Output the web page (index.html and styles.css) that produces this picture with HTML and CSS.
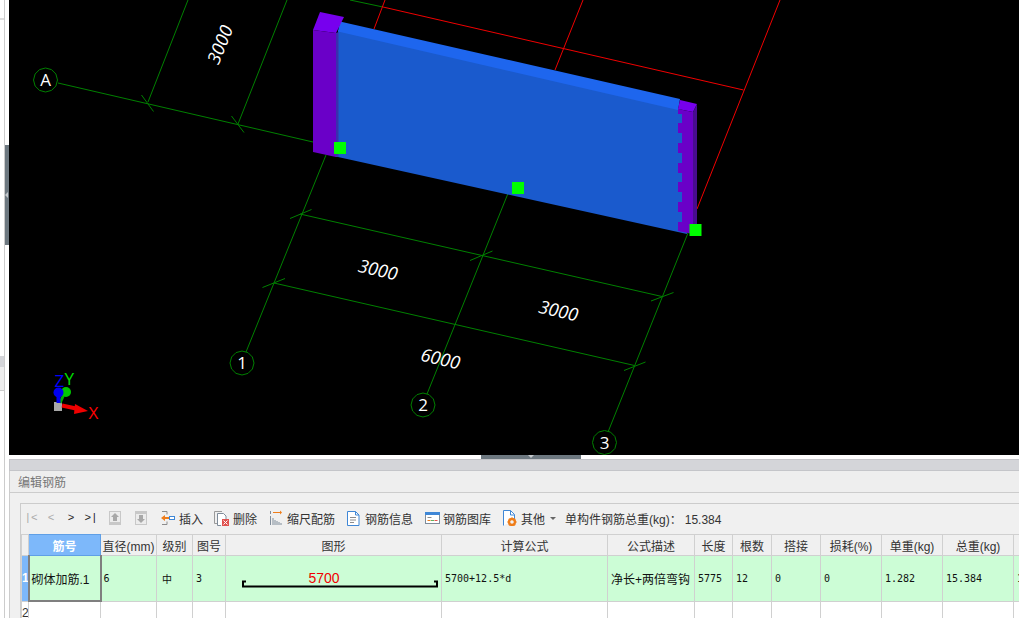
FILE: index.html
```html
<!DOCTYPE html>
<html lang="zh-CN">
<head>
  <meta charset="UTF-8">
  <title>编辑钢筋</title>
  <link rel="stylesheet" href="styles.css">
</head>
<body>
  <div class="app">
    <div class="side">
      <div class="side-stub">
        <div class="stub-top"></div>
        <div class="stub-band"></div>
        <div class="stub-title"></div>
      </div>
      <div class="side-handle"><span class="side-arrow"></span></div>
    </div>

    <div class="main">
      <svg class="view" width="1010" height="455" viewBox="9 0 1010 455">
        <defs>
          <polygon id="bubble" points="12,0 10.4,6 6,10.4 0,12 -6,10.4 -10.4,6 -12,0 -10.4,-6 -6,-10.4 0,-12 6,-10.4 10.4,-6"/>
        </defs>

        <!-- grid lines -->
        <g class="grid">
          <line x1="58" y1="83" x2="313" y2="142"/>
          <line x1="246" y1="352" x2="326" y2="155"/>
          <line x1="427" y1="394" x2="511" y2="186"/>
          <line x1="608" y1="432" x2="688" y2="233"/>
          <line x1="350" y1="0" x2="383" y2="7"/>
          <!-- dimension lines -->
          <line x1="300" y1="214" x2="662" y2="296.5"/>
          <line x1="274" y1="283" x2="634.5" y2="365.5"/>
          <line x1="148" y1="102" x2="188" y2="0"/>
          <line x1="238" y1="124" x2="287" y2="0"/>
          <!-- ticks -->
          <line x1="290" y1="218.5" x2="311.5" y2="209.5"/>
          <line x1="470" y1="260.5" x2="492.5" y2="251"/>
          <line x1="651" y1="301" x2="673.5" y2="292.5"/>
          <line x1="262.5" y1="287.5" x2="285" y2="278.5"/>
          <line x1="624" y1="370.5" x2="645.5" y2="362"/>
          <line x1="141.5" y1="95" x2="153.5" y2="111.5"/>
          <line x1="231.5" y1="116" x2="244" y2="132.5"/>
        </g>
        <g class="red-lines">
          <line x1="383" y1="7" x2="743.5" y2="90"/>
          <line x1="385" y1="0" x2="374" y2="29"/>
          <line x1="583" y1="0" x2="555" y2="70"/>
          <line x1="780" y1="0" x2="697" y2="209"/>
        </g>

        <!-- wall -->
        <polygon class="wall-front" points="338,30 682,110 687,234 338,157"/>
        <polygon class="wall-top" points="340,21.5 680,99 678,110 338,31.5"/>
        <polygon class="wall-edge" points="336,33 338.500,32 338.500,157 336,157"/>
        <polygon class="col-top" points="320,12 344,17 336,33 313,30"/>
        <polygon class="col-front" points="313,30 336,33 336,157 313,152"/>
        <polygon class="col-top" points="680,100 697,104 693,112 678,109"/>
        <polygon class="col-side" points="693,112 697,104 697,228 693,234"/>
        <polygon class="col-front" points="678,109 693,112 693,234 678,231 678,222 682,222 682,212 678,212 678,202 682,202 682,192 678,192 678,182 682,182 682,173 678,173 678,163 682,163 682,153 678,153 678,143 682,143 682,133 678,133 678,123 682,123 682,114 678,114"/>

        <!-- grips -->
        <rect class="grip" x="334" y="142" width="12" height="12"/>
        <rect class="grip" x="512" y="182" width="12" height="12"/>
        <rect class="grip" x="689.5" y="224" width="12" height="12"/>

        <!-- axis bubbles -->
        <use class="bubble" href="#bubble" x="45.5" y="80"/>
        <use class="bubble" href="#bubble" x="242" y="363"/>
        <use class="bubble" href="#bubble" x="423" y="405"/>
        <use class="bubble" href="#bubble" x="604.5" y="442.5"/>
        <text class="bubble-label" x="45.5" y="86">A</text>
        <text class="bubble-label" x="242" y="369">1</text>
        <text class="bubble-label" x="423" y="411">2</text>
        <text class="bubble-label" x="604.5" y="448.5">3</text>

        <!-- dimensions -->
        <text class="dim" transform="translate(376.5 276) rotate(13)">3000</text>
        <text class="dim" transform="translate(557 317) rotate(13)">3000</text>
        <text class="dim" transform="translate(439 365) rotate(13)">6000</text>
        <text class="dim" transform="translate(226 47) rotate(-68)">3000</text>

        <!-- ucs -->
        <rect x="54" y="402" width="8" height="9" fill="#a8a8a8"/>
        <line x1="60" y1="403" x2="65" y2="392" stroke="#00b000" stroke-width="3"/>
        <ellipse cx="66" cy="392" rx="5" ry="5" fill="#00c800"/>
        <line x1="58.5" y1="403" x2="58.5" y2="392" stroke="#0000f0" stroke-width="4"/>
        <circle cx="58.5" cy="392.5" r="5" fill="#0000f0"/>
        <line x1="62" y1="405.5" x2="76" y2="408.5" stroke="#f00000" stroke-width="4"/>
        <polygon points="75,404 88,411 74,414" fill="#f00000"/>
        <text class="ucs" x="54.5" y="387" fill="#0000ff">Z</text>
        <text class="ucs" x="64.5" y="385" fill="#00e000">Y</text>
        <text class="ucs" x="88.5" y="419" fill="#ff0000">X</text>
      </svg>

      <div class="splitter"><span class="splitter-handle"><span class="splitter-arrow"></span></span></div>

      <div class="panel">
        <div class="panel-band"></div>
        <div class="panel-title">编辑钢筋</div>
        <div class="panel-body">
          <div class="rebar-box">
            <div class="toolbar">
              <div class="nav">
                <span class="nav-btn off">|&lt;</span>
                <span class="nav-btn off">&lt;</span>
                <span class="nav-btn">&gt;</span>
                <span class="nav-btn">&gt;|</span>
              </div>

              <svg class="tb-icon tb-move" viewBox="0 0 16 16">
                <rect x="3" y="1" width="12" height="14" fill="#c8c8c8"/>
                <rect x="4" y="2" width="10" height="10" fill="#ececec"/>
                <path d="M9 3l4 4h-2v4H7V7H5z" fill="#a8a8a8"/>
              </svg>
              <svg class="tb-icon tb-btn" viewBox="0 0 16 16">
                <rect x="2" y="1" width="12" height="14" fill="#c8c8c8"/>
                <rect x="3" y="4" width="10" height="10" fill="#ececec"/>
                <path d="M6 5h4v4h2l-4 4-4-4h2z" fill="#a8a8a8"/>
              </svg>

              <div class="tb-btn tb-item">
                <svg class="tb-icon" viewBox="0 0 16 16">
                  <path d="M2 1.500h5v3M2 14.500h5v-3" fill="none" stroke="#8c8c8c"/>
                  <path d="M1 8l4-3v2h4v2H5v2z" fill="#ef7d1a"/>
                  <rect x="9.500" y="6.500" width="5" height="3" fill="#fff" stroke="#3f87d6"/>
                </svg>
                插入
              </div>
              <div class="tb-btn tb-item">
                <svg class="tb-icon" viewBox="0 0 16 16">
                  <path d="M4 13.500H.5V1.500H8" fill="none" stroke="#9a9a9a"/>
                  <path d="M7 15.500H3.500V3.500h6l2.500 2.500v3" fill="#fff" stroke="#7f8c9a"/>
                  <rect x="8" y="9" width="7" height="7" fill="#e0524f"/>
                  <path d="M9.500 10.500l4 4m0-4l-4 4" stroke="#fff"/>
                </svg>
                删除
              </div>
              <div class="tb-btn tb-item">
                <svg class="tb-icon" viewBox="0 0 16 16">
                  <path d="M2.500 1v3" stroke="#7f8c9a"/>
                  <path d="M5 2.500h7" stroke="#ef7d1a"/>
                  <path d="M12 .5l2 2-2 2z" fill="#ef7d1a"/>
                  <path d="M2.500 6v9M5 8v7M7 10v5M9 11v4M11 12v3M13 13v2" stroke="#7f8c9a"/>
                </svg>
                缩尺配筋
              </div>
              <div class="tb-btn tb-item">
                <svg class="tb-icon" viewBox="0 0 16 16">
                  <path d="M1.500 1.500h8l3.500 3.500v10.500H1.500z" fill="#fff" stroke="#3f87d6"/>
                  <path d="M9.500 1.500V5H13" fill="none" stroke="#3f87d6"/>
                  <path d="M4 7.500h6M4 10h6M4 12.500h4" stroke="#8c8c8c"/>
                </svg>
                钢筋信息
              </div>
              <div class="tb-btn tb-item">
                <svg class="tb-icon" viewBox="0 0 16 16">
                  <rect x="1.500" y="2.500" width="14" height="11" fill="#fff" stroke="#7f8c9a"/>
                  <rect x="1" y="2" width="15" height="3" fill="#3f87d6"/>
                  <path d="M3.500 7.500h4" stroke="#8c8c8c"/>
                  <path d="M3.500 10.500h3" stroke="#ef7d1a"/>
                  <path d="M7 10.500h3" stroke="#5fb35f"/>
                  <path d="M10.500 10.500h3" stroke="#e0524f"/>
                </svg>
                钢筋图库
              </div>
              <div class="tb-btn tb-item">
                <svg class="tb-icon" viewBox="0 0 16 16">
                  <path d="M1.500 15.500V.5h7l4 4v5" fill="#fff" stroke="#3f87d6"/>
                  <path d="M8.500.5V5h4" fill="none" stroke="#3f87d6"/>
                  <circle cx="10" cy="12" r="3" fill="none" stroke="#ef7d1a" stroke-width="2.400"/>
                  <path d="M10 7.500v2M10 14.500v2M5.500 12h2M12.500 12h2M6.800 8.800l1.500 1.500M11.700 13.700l1.500 1.500M13.200 8.800l-1.500 1.500M8.300 13.700l-1.500 1.500" stroke="#ef7d1a" stroke-width="1.400"/>
                </svg>
                其他
                <span class="caret"></span>
              </div>
              <div class="total">单构件钢筋总重(kg)：<span class="total-val">15.384</span></div>
            </div>

            <table class="rebar-table">
              <colgroup>
                <col class="c-head"><col class="c-name"><col class="c-dia"><col class="c-grade"><col class="c-fig">
                <col class="c-shape"><col class="c-formula"><col class="c-desc"><col class="c-len"><col class="c-count">
                <col class="c-lap"><col class="c-loss"><col class="c-unit"><col class="c-sum"><col class="c-more">
              </colgroup>
              <thead>
                <tr>
                  <th></th>
                  <th class="active">筋号</th>
                  <th>直径(mm)</th>
                  <th>级别</th>
                  <th>图号</th>
                  <th>图形</th>
                  <th>计算公式</th>
                  <th>公式描述</th>
                  <th>长度</th>
                  <th>根数</th>
                  <th>搭接</th>
                  <th>损耗(%)</th>
                  <th>单重(kg)</th>
                  <th>总重(kg)</th>
                  <th></th>
                </tr>
              </thead>
              <tbody>
                <tr class="row-on">
                  <td class="row-head on">1</td>
                  <td class="cell-cur">砌体加筋.1</td>
                  <td class="num dia">6</td>
                  <td class="grade">中</td>
                  <td class="num">3</td>
                  <td class="shape">
                    <svg class="shape-svg" width="215" height="44" viewBox="0 0 215 44">
                      <text class="shape-len" x="98" y="27">5700</text>
                      <path class="shape-bar" d="M20 25.500h-3v5h194v-5h-3"/>
                    </svg>
                  </td>
                  <td class="num">5700+12.5*d</td>
                  <td>净长+两倍弯钩</td>
                  <td class="num">5775</td>
                  <td class="num">12</td>
                  <td class="num">0</td>
                  <td class="num">0</td>
                  <td class="num">1.282</td>
                  <td class="num">15.384</td>
                  <td class="num">1</td>
                </tr>
                <tr class="row-off">
                  <td class="row-head">2</td>
                  <td></td><td></td><td></td><td></td><td></td><td></td><td></td>
                  <td></td><td></td><td></td><td></td><td></td><td></td><td></td>
                </tr>
              </tbody>
            </table>
          </div>
        </div>
      </div>
    </div>
  </div>
</body>
</html>
```

FILE: styles.css
```css
html, body {
  margin: 0;
  height: 618px;
  overflow: hidden;
  background: #fff;
}
body {
  font-family: "Liberation Sans", "Noto Sans CJK SC", sans-serif;
  font-size: 12px;
  color: #333;
}
.app {
  display: flex;
  width: 1019px;
  height: 618px;
  overflow: hidden;
}

/* left gutter */
.side {
  display: flex;
  flex: none;
  width: 9px;
}
.side-stub {
  width: 4px;
  border-right: 1px solid #ccc;
}
.stub-top {
  height: 18px;
  border-bottom: 2px solid #ddd;
}
.stub-band {
  height: 11px;
  margin-top: 336px;
  background: #d4d5d9;
}
.stub-title {
  height: 23px;
  background: #eee;
  border-bottom: 1px solid #ccc;
}
.side-handle {
  display: flex;
  align-items: center;
  width: 4px;
  height: 100px;
  margin-top: 145px;
  background: #6d7880;
}
.side-arrow {
  border: 3px solid transparent;
  border-left-width: 0;
  border-right-color: #c4c8cc;
}

.main {
  flex: none;
  display: flex;
  flex-direction: column;
  width: 1010px;
}

/* drawing */
.view {
  display: block;
  flex: none;
  background: #000;
}
.grid line {
  stroke: #008000;
  stroke-width: 1;
}
.red-lines line {
  stroke: #f00000;
  stroke-width: 1;
}
.wall-front { fill: #1a5acd; }
.wall-top { fill: #1e66ee; }
.wall-edge { fill: #3a30ad; }
.col-top { fill: #7700ee; }
.col-front { fill: #6a00c8; }
.col-side { fill: #480c90; }
.grip { fill: #00ff00; }
.bubble {
  fill: #000;
  stroke: #008000;
  stroke-width: 1;
}
.bubble-label {
  fill: #fff;
  font-family: "Open Sans", sans-serif;
  font-size: 17px;
  text-anchor: middle;
}
.dim {
  fill: #fff;
  font-family: "Open Sans", sans-serif;
  font-size: 18px;
  font-style: italic;
  text-anchor: middle;
}
.ucs {
  font-family: "Open Sans", sans-serif;
  font-size: 17px;
}

/* splitter */
.splitter {
  flex: none;
  height: 4px;
  padding-left: 472px;
  background: #fff;
}
.splitter-handle {
  display: flex;
  justify-content: center;
  width: 100px;
  height: 4px;
  background: #6d7880;
}
.splitter-arrow {
  width: 0;
  height: 0;
  border: 3px solid transparent;
  border-bottom-width: 0;
  border-top-color: #c4c8cc;
}

/* rebar panel */
.panel {
  flex: 1;
  background: #f0f0f0;
}
.panel-band {
  height: 10px;
  background: #d4d5d9;
  border-top: 1px solid #c4c5c9;
  border-bottom: 1px solid #c4c5c9;
  border-left: 1px solid #c4c5c9;
}
.panel-title {
  height: 21px;
  padding-left: 8px;
  line-height: 25px;
  color: #777;
  background: #eee;
  border-bottom: 1px solid #ccc;
  border-left: 1px solid #ccc;
}
.panel-body {
  padding: 10px 0 0 10px;
  border-left: 1px solid #ccc;
}
.rebar-box {
  width: 1100px;
  border-top: 1px solid #ccc;
  border-left: 1px solid #ccc;
}
.toolbar {
  display: flex;
  align-items: center;
  box-sizing: border-box;
  height: 30px;
  padding-bottom: 2px;
  background: #f0f0f0;
  white-space: nowrap;
}
.nav {
  display: flex;
}
.nav-btn {
  width: 20px;
  font-family: "Liberation Mono", monospace;
  font-size: 11px;
  text-align: center;
  color: #222;
}
.nav-btn.off {
  color: #aaa;
}
.tb-icon {
  flex: none;
  width: 16px;
  height: 16px;
}
.tb-move {
  margin-left: 5px;
}
.tb-btn {
  margin-left: 11px;
}
.tb-item {
  display: flex;
  align-items: center;
  gap: 3px;
}
.caret {
  width: 0;
  height: 0;
  margin-left: 2px;
  border: 3px solid transparent;
  border-bottom-width: 0;
  border-top-color: #666;
}
.total {
  margin-left: 9px;
}
.total-val {
  margin-left: 3px;
}

/* table */
.rebar-table {
  table-layout: fixed;
  width: 1032px;
  border-collapse: collapse;
}
.c-head { width: 7px; }
.c-name { width: 72px; }
.c-dia { width: 56px; }
.c-grade { width: 36px; }
.c-fig { width: 33px; }
.c-shape { width: 216px; }
.c-formula { width: 166px; }
.c-desc { width: 87px; }
.c-len { width: 38px; }
.c-count { width: 39px; }
.c-lap { width: 49px; }
.c-loss { width: 61px; }
.c-unit { width: 61px; }
.c-sum { width: 71px; }
.c-more { width: 40px; }

.rebar-table th,
.rebar-table td {
  padding: 0;
  border: 1px solid #d0d0d0;
  overflow: hidden;
  white-space: nowrap;
}
.rebar-table th {
  height: 20px;
  font-weight: normal;
  background: #f0f0f0;
}
.rebar-table th.active {
  color: #fff;
  font-weight: bold;
  background: #7db8fa;
  border-color: #5f9fe6;
}
.rebar-table td {
  padding-left: 3px;
  color: #111;
}
.row-on td {
  height: 44px;
  background: #ccfdd6;
}
.row-off td {
  height: 22px;
  background: #fff;
}
.rebar-table .row-head {
  padding: 0;
  text-align: center;
  color: #333;
  background: #fff;
}
.rebar-table .row-head.on {
  color: #fff;
  font-weight: bold;
  background: #7db8fa;
}
.rebar-table .cell-cur {
  padding-left: 2px;
  border: 2px solid #7f7f7f;
  border-top: 0;
}
.rebar-table .num {
  font-family: "DejaVu Sans Mono", "Liberation Mono", monospace;
  font-size: 10px;
}
.rebar-table .dia {
  padding-left: 2px;
}
.rebar-table .grade {
  padding-left: 5px;
  font-size: 10px;
}
.rebar-table .shape {
  padding: 0;
}
.shape-svg {
  display: block;
}
.shape-len {
  fill: #f00000;
  font-family: "Liberation Sans", sans-serif;
  font-size: 14px;
  text-anchor: middle;
}
.shape-bar {
  fill: none;
  stroke: #000;
  stroke-width: 2;
}
```
